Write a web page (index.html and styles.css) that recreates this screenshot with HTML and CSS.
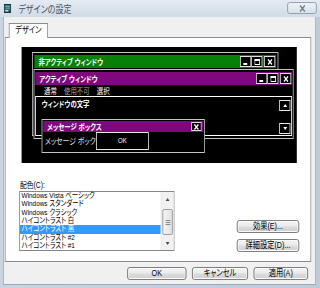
FILE: index.html
```html
<!DOCTYPE html>
<html lang="ja">
<head>
  <meta charset="utf-8">
  <title>デザインの設定</title>
  <link rel="stylesheet" href="styles.css">
</head>
<body>
<div class="screen">
<div class="dialog">

  <!-- title bar -->
  <div class="titlebar">
    <svg class="app-icon" width="9" height="9" viewBox="0 0 9 9">
      <rect x="0.5" y="0.5" width="8" height="8" fill="#27465e" stroke="#1b2f40"/>
      <rect x="1.5" y="1.5" width="6" height="2" fill="#49b3c9"/>
      <rect x="1.5" y="4" width="6" height="1.5" fill="#4aa14a"/>
      <rect x="1.5" y="6" width="4" height="1.5" fill="#c9d7e4"/>
    </svg>
    <span class="title">デザインの設定</span>
    <div class="close">
      <svg width="10" height="7" viewBox="0 0 10 7"><path d="M2 0.5 L8 6.5 M8 0.5 L2 6.5" stroke="#6f7a86" stroke-width="1.6"/></svg>
    </div>
  </div>

  <div class="client">
    <div class="tabs"><div class="tab">デザイン</div></div>

    <div class="panel">
      <!-- preview of the colour scheme -->
      <div class="preview">
        <div class="win win-inactive">
          <div class="caption caption-inactive">
            <span>非アクティブ ウィンドウ</span>
            <div class="cbtns">
              <div class="cbtn"><svg width="6" height="6" viewBox="0 0 6 6"><rect x="0" y="4" width="5" height="2" fill="#fff"/></svg></div>
              <div class="cbtn"><svg width="7" height="6" viewBox="0 0 7 6"><rect x="0.5" y="0.5" width="6" height="5" fill="none" stroke="#fff"/><rect x="0" y="0" width="7" height="2" fill="#fff"/></svg></div>
              <div class="cbtn cbtn-x"><svg width="7" height="6" viewBox="0 0 7 6"><path d="M1 0.5 L6 5.5 M6 0.5 L1 5.5" stroke="#fff" stroke-width="1.6"/></svg></div>
            </div>
          </div>
        </div>

        <div class="win win-active">
          <div class="caption caption-active">
            <span>アクティブ ウィンドウ</span>
            <div class="cbtns">
              <div class="cbtn"><svg width="6" height="6" viewBox="0 0 6 6"><rect x="0" y="4" width="5" height="2" fill="#fff"/></svg></div>
              <div class="cbtn"><svg width="7" height="6" viewBox="0 0 7 6"><rect x="0.5" y="0.5" width="6" height="5" fill="none" stroke="#fff"/><rect x="0" y="0" width="7" height="2" fill="#fff"/></svg></div>
              <div class="cbtn cbtn-x"><svg width="7" height="6" viewBox="0 0 7 6"><path d="M1 0.5 L6 5.5 M6 0.5 L1 5.5" stroke="#fff" stroke-width="1.6"/></svg></div>
            </div>
          </div>
          <div class="menu">
            <span>通常</span>
            <span class="disabled">使用不可</span>
            <span>選択</span>
          </div>
          <div class="textarea">
            <span>ウィンドウの文字</span>
            <div class="vscroll">
              <div class="sbtn"><svg width="5" height="3" viewBox="0 0 5 3"><path d="M0 3 L2.5 0 L5 3 Z" fill="#fff"/></svg></div>
              <div class="sbtn"><svg width="5" height="3" viewBox="0 0 5 3"><path d="M0 0 L2.5 3 L5 0 Z" fill="#fff"/></svg></div>
            </div>
          </div>
        </div>

        <div class="msgbox">
          <div class="caption caption-msg">
            <span>メッセージ ボックス</span>
            <div class="cbtn cbtn-msg"><svg width="7" height="6" viewBox="0 0 7 6"><path d="M1 0.5 L6 5.5 M6 0.5 L1 5.5" stroke="#fff" stroke-width="1.6"/></svg></div>
          </div>
          <div class="msg-body">
            <span>メッセージ ボックス</span>
            <div class="okbtn">OK</div>
          </div>
        </div>
      </div>

      <!-- scheme list -->
      <div class="scheme-row">
        <div class="scheme">
          <div class="label">配色(C):</div>
          <div class="listbox">
            <ul class="items">
              <li>Windows Vista ベーシック</li>
              <li>Windows スタンダード</li>
              <li>Windows クラシック</li>
              <li>ハイコントラスト 白</li>
              <li class="selected">ハイコントラスト 黒</li>
              <li>ハイコントラスト #2</li>
              <li>ハイコントラスト #1</li>
            </ul>
            <div class="lscroll">
              <div class="arrow"><svg width="5" height="3" viewBox="0 0 5 3"><path d="M0 3 L2.5 0 L5 3 Z" fill="#4d4d4d"/></svg></div>
              <div class="track">
                <div class="thumb"><span class="grip"></span></div>
              </div>
              <div class="arrow"><svg width="5" height="3" viewBox="0 0 5 3"><path d="M0 0 L2.5 3 L5 0 Z" fill="#4d4d4d"/></svg></div>
            </div>
          </div>
        </div>
        <div class="side-btns">
          <button class="btn">効果(E)...</button>
          <button class="btn">詳細設定(D)...</button>
        </div>
      </div>
    </div>

    <div class="footer">
      <button class="btn btn-ok">OK</button>
      <button class="btn btn-cancel">キャンセル</button>
      <button class="btn btn-apply">適用(A)</button>
    </div>
  </div>
</div>
</div>
</body>
</html>
```

FILE: styles.css
```css
* {
  box-sizing: border-box;
}
html, body {
  margin: 0;
  overflow: hidden;
}
body {
  background: #c3cfdc;
  font-family: "Liberation Sans", "Noto Sans CJK JP", sans-serif;
  font-size: 9px;
  font-feature-settings: "palt";
  color: #000;
}

.screen {
  width: 320px;
  height: 288px;
  overflow: hidden;
}

/* the dialog is laid out wider and squeezed to the screenshot's narrow text */
.dialog {
  width: 400px;
  height: 288px;
  transform: scaleX(0.8);
  transform-origin: 0 0;
  background: linear-gradient(90deg, #c9d4e0, #bfcbd9);
}

.titlebar {
  height: 17px;
  display: flex;
  align-items: center;
  padding: 0 4px 0 5px;
  background: linear-gradient(#e3eaf2, #d2dce7);
}
.app-icon {
  display: block;
}
.title {
  margin-left: 9px;
  font-size: 10px;
  color: #4a525b;
}
.close {
  margin-left: auto;
  align-self: flex-start;
  margin-top: 2px;
  width: 37px;
  height: 12px;
  border: 1px solid #8d99a6;
  border-radius: 3px;
  background: linear-gradient(#eef2f6, #d8e0e9);
  display: flex;
  align-items: center;
  justify-content: center;
}
.close svg {
  display: block;
}

.client {
  margin: 0 5px 0 4px;
  height: 268px;
  background: #f0f0f0;
  border: 1px solid #9aabbe;
  border-top: none;
}

.tabs {
  padding: 6px 0 0 6px;
  display: flex;
}
.tab {
  position: relative;
  z-index: 1;
  height: 15px;
  margin-bottom: -1px;
  padding: 0 7px;
  border: 1px solid #898c95;
  border-bottom: none;
  background: #fff;
  line-height: 13px;
}

.panel {
  margin-left: 1px;
  width: 383px;
  border: 1px solid #898c95;
  background: #fff;
  padding: 9px 14px 10px 20px;
}

.preview {
  position: relative;
  width: 344px;
  height: 116px;
  background: #000;
  font-size: 7.5px;
  color: #fff;
  overflow: hidden;
}
.win, .msgbox {
  position: absolute;
  background: #000;
  border: 1px solid #c4c4c4;
}
.win-inactive {
  left: 13px;
  top: 5px;
  width: 308px;
  height: 84px;
  padding: 2px;
}
.win-active {
  left: 15px;
  top: 22px;
  width: 325px;
  padding: 2px 1px;
}
.msgbox {
  left: 25px;
  top: 72px;
  width: 204px;
  padding: 1px;
}

.caption {
  height: 13px;
  display: flex;
  align-items: center;
  padding: 0 1px 0 5px;
  font-size: 8px;
  font-weight: bold;
  white-space: nowrap;
}
.caption-inactive {
  background: #068006;
}
.caption-active {
  background: #80087e;
}
.caption-msg {
  height: 11px;
  background: #80087e;
  padding-right: 2px;
}
.cbtns {
  margin-left: auto;
  display: flex;
}
.cbtn {
  width: 14px;
  height: 11px;
  border: 1px solid #e2e2e2;
  background: #000;
  display: flex;
  align-items: center;
  justify-content: center;
}
.cbtn svg {
  display: block;
}
.cbtn-x {
  margin-left: 2px;
}
.caption-active .cbtn, .cbtn-msg {
  border-color: #ecd4ec;
}
.cbtn-msg {
  margin-left: auto;
  width: 13px;
  height: 9px;
}

.menu {
  height: 11px;
  display: flex;
  align-items: center;
  gap: 9px;
  padding-left: 11px;
  font-size: 8px;
}
.menu .disabled {
  color: #a6a6a6;
}

.textarea {
  height: 40px;
  border: 1px solid #fff;
  display: flex;
  align-items: flex-start;
  padding: 3px 1px 0 7px;
  font-size: 8px;
  font-weight: bold;
  line-height: 9px;
}
.vscroll {
  margin-left: auto;
  height: 34px;
  display: flex;
  flex-direction: column;
  justify-content: space-between;
}
.sbtn {
  width: 14px;
  height: 11px;
  border: 1px solid #e8e8e8;
  display: flex;
  align-items: center;
  justify-content: center;
}
.sbtn svg {
  display: block;
}

.msg-body {
  position: relative;
  height: 19px;
  padding-left: 2px;
  font-size: 8.5px;
  line-height: 19px;
  color: #e6e6e6;
  white-space: nowrap;
}
.okbtn {
  position: absolute;
  left: 66px;
  top: 0;
  width: 66px;
  height: 18px;
  border: 1px solid #e6e6e6;
  background: #000;
  color: #fff;
  font-size: 7.5px;
  text-align: center;
  line-height: 16px;
}

.scheme-row {
  display: flex;
  align-items: flex-end;
  justify-content: space-between;
  margin-top: 17px;
  margin-left: -3px;
}
.label {
  height: 11px;
  line-height: 11px;
  padding-left: 1px;
  font-size: 8.5px;
}
.listbox {
  width: 194px;
  height: 60px;
  border: 1px solid #82878f;
  display: flex;
}
.items {
  flex: 1;
  list-style: none;
  margin: 0;
  padding: 0;
  font-size: 8px;
}
.items li {
  height: 8.33px;
  line-height: 8.33px;
  padding-left: 2px;
  white-space: nowrap;
}
.items .selected {
  background: #3399ff;
  color: #fff;
}
.lscroll {
  width: 16px;
  display: flex;
  flex-direction: column;
  background: #f1f1f1;
  border-left: 1px solid #e6e6e6;
}
.arrow {
  height: 14px;
  display: flex;
  align-items: center;
  justify-content: center;
}
.arrow svg {
  display: block;
}
.track {
  flex: 1;
  padding: 3px 1px 0;
}
.thumb {
  height: 26px;
  border: 1px solid #959595;
  border-radius: 2px;
  background: linear-gradient(90deg, #f4f4f4, #e2e2e2);
  display: flex;
  align-items: center;
  justify-content: center;
}
.grip {
  width: 6px;
  height: 5px;
  border-top: 1px solid #8a8a8a;
  border-bottom: 1px solid #8a8a8a;
  background: linear-gradient(#8a8a8a, #8a8a8a) center / 100% 1px no-repeat;
}

.side-btns {
  display: flex;
  flex-direction: column;
  gap: 6px;
  margin-bottom: -1px;
}
.btn {
  font-family: "Liberation Sans", "Noto Sans CJK JP", sans-serif;
  font-size: 9px;
  font-feature-settings: "palt";
  color: #000;
  height: 13px;
  padding: 0;
  line-height: 11px;
  border: 1px solid #707070;
  border-radius: 3px;
  background: linear-gradient(#f3f3f3 0%, #ebebeb 48%, #dcdcdc 52%, #cfcfcf 100%);
  box-shadow: inset 0 0 0 1px #fbfbfb;
}
.side-btns .btn {
  width: 78px;
}

.footer {
  display: flex;
  justify-content: flex-end;
  gap: 7px;
  margin-top: 5px;
  padding-right: 9px;
}
.btn-ok {
  width: 74px;
}
.btn-cancel {
  width: 70px;
}
.btn-apply {
  width: 68px;
}
```
